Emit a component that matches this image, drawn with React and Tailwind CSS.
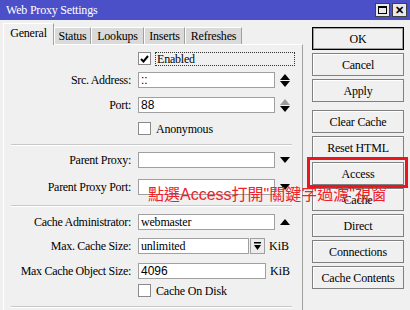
import React from "react";

const serif = { fontFamily: '"Liberation Serif", "Times New Roman", serif' };

const Tri = ({ up, gray }) => (
  <svg width="10" height="6" viewBox="0 0 10 6">
    {up ? (
      <path d="M5 0 L10 6 L0 6 Z" fill={gray ? "#9a9a9a" : "#000"} />
    ) : (
      <path d="M0 0 L10 0 L5 6 Z" fill={gray ? "#9a9a9a" : "#000"} />
    )}
  </svg>
);

const Field = ({ label, value, mt, sans, up, down, upGray }) => (
  <div className={`flex items-center h-[16px] ${mt}`}>
    <div className="w-[127px] text-right text-[12px] tracking-[-0.3px] leading-none text-black">{label}</div>
    <div className="w-[7px]" />
    <div
      className={`w-[137px] h-[16px] bg-white border border-[#a0a0a0] px-[2px] flex items-center leading-none ${
        sans ? "font-['Liberation_Sans'] text-[12px]" : "text-[12px] tracking-[-0.2px]"
      }`}
    >
      {value}
    </div>
    <div className="w-[15px] flex flex-col items-end justify-center gap-[1px]">
      {up && <Tri up gray={upGray} />}
      {down && <Tri />}
    </div>
  </div>
);

const Check = ({ label, checked, mt, focus }) => (
  <div className={`flex items-center h-[13px] ${mt}`}>
    <div className="w-[134px]" />
    <div className="w-[13px] h-[13px] bg-white border border-[#8a8a8a] flex items-center justify-center">
      {checked && (
        <svg width="9" height="8" viewBox="0 0 9 8">
          <path d="M1 4 L3.5 6.5 L8 1" stroke="#000" strokeWidth="2" fill="none" />
        </svg>
      )}
    </div>
    <div
      className={`ml-[4px] h-[14px] flex items-center text-[12px] tracking-[-0.2px] leading-none px-[1px] ${
        focus ? "w-[140px] border border-dotted border-[#333]" : ""
      }`}
    >
      {label}
    </div>
  </div>
);

const Sep = ({ mt }) => <div className={`${mt} mx-[7px] w-[281px] h-[2px] border-t border-[#c8c8c8] border-b border-b-white`} />;

const Btn = ({ children, def, mt }) => (
  <div
    className={`w-[92px] h-[23px] flex items-center justify-center text-[12px] tracking-[-0.2px] leading-none bg-[#f0f0f0] ${mt || ""} ${
      def ? "border border-black shadow-[inset_0_0_0_1px_#a0a0a0]" : "border border-[#808080] shadow-[inset_1px_1px_0_#fff]"
    }`}
  >
    {children}
  </div>
);

export default function App() {
  const tabs = [
    { n: "Status", w: "w-[37px]" },
    { n: "Lookups", w: "w-[53px]" },
    { n: "Inserts", w: "w-[41px]" },
    { n: "Refreshes", w: "w-[57px]" },
  ];
  return (
    <div className="w-[410px] h-[310px] bg-[#f0f0f0] overflow-hidden relative text-black" style={serif}>
      <div className="h-[20px] bg-[#4c50c8] flex items-center justify-between pl-[6px] pr-[3px]">
        <span className="text-white text-[12px] tracking-[-0.2px] leading-none">Web Proxy Settings</span>
        <div className="flex gap-[2px]">
          <div className="w-[15px] h-[14px] bg-[#e8e8e8] border border-[#404040] flex items-center justify-center">
            <div className="w-[9px] h-[8px] border border-black border-t-2" />
          </div>
          <div className="w-[15px] h-[14px] bg-[#e8e8e8] border border-[#404040] flex items-center justify-center text-[11px] font-bold leading-none font-['Liberation_Sans']">
            ✕
          </div>
        </div>
      </div>

      <div className="flex">
        <div className="w-[303px] pl-[3px]">
          <div className="h-[24px] flex items-end pt-[2px]">
            <div className="w-[51px] h-[22px] bg-[#f0f0f0] border-l border-t border-white border-r border-r-[#a0a0a0] flex items-start justify-center pt-[3px] text-[12px] tracking-[-0.2px] leading-none -mb-[1px] relative z-10">
              General
            </div>
            {tabs.map((t) => (
              <div
                key={t.n}
                className={`${t.w} h-[17px] bg-[#dadada] border-l border-t border-white border-r border-r-[#a0a0a0] flex items-center justify-center text-[12px] tracking-[-0.2px] leading-none`}
              >
                {t.n}
              </div>
            ))}
          </div>
          <div className="h-[266px] border-l border-t border-white border-r border-r-[#a0a0a0] flex flex-col">
            <Check label="Enabled" checked focus mt="mt-[7px]" />
            <Field label="Src. Address:" value="::" mt="mt-[7px]" sans up down />
            <Field label="Port:" value="88" mt="mt-[9px]" sans up down upGray />
            <Check label="Anonymous" mt="mt-[9px]" />
            <Sep mt="mt-[9px]" />
            <Field label="Parent Proxy:" value="" mt="mt-[6px]" down />
            <Field label="Parent Proxy Port:" value="" mt="mt-[11px]" down />
            <Sep mt="mt-[10px]" />
            <Field label="Cache Administrator:" value="webmaster" mt="mt-[7px]" up />
            <div className="flex items-center h-[16px] mt-[8px]">
              <div className="w-[127px] text-right text-[12px] tracking-[-0.3px] leading-none">Max. Cache Size:</div>
              <div className="w-[7px]" />
              <div className="w-[111px] h-[16px] bg-white border border-[#a0a0a0] px-[2px] flex items-center text-[12px] tracking-[-0.2px] leading-none">
                unlimited
              </div>
              <div className="w-[15px] h-[16px] ml-[1px] bg-[#ececec] border border-[#a0a0a0] flex items-center justify-center">
                <svg width="9" height="9" viewBox="0 0 9 9">
                  <rect x="1" y="0" width="7" height="1.5" fill="#000" />
                  <path d="M1 3 L8 3 L4.5 8 Z" fill="#000" />
                </svg>
              </div>
              <span className="ml-[4px] text-[12px] leading-none">KiB</span>
            </div>
            <div className="flex items-center h-[16px] mt-[9px]">
              <div className="w-[127px] text-right text-[12px] tracking-[-0.3px] leading-none">Max Cache Object Size:</div>
              <div className="w-[7px]" />
              <div className="w-[128px] h-[16px] bg-white border border-[#a0a0a0] px-[2px] flex items-center text-[12px] leading-none font-['Liberation_Sans']">
                4096
              </div>
              <span className="ml-[4px] text-[12px] leading-none">KiB</span>
            </div>
            <Check label="Cache On Disk" mt="mt-[5px]" />
            <Sep mt="mt-[9px]" />
          </div>
        </div>

        <div className="flex flex-col pl-[9px] pt-[7px] gap-[3px]">
          <Btn def>OK</Btn>
          <Btn>Cancel</Btn>
          <Btn>Apply</Btn>
          <Btn mt="mt-[5px]">Clear Cache</Btn>
          <Btn>Reset HTML</Btn>
          <Btn>Access</Btn>
          <Btn>Cache</Btn>
          <Btn>Direct</Btn>
          <Btn>Connections</Btn>
          <Btn>Cache Contents</Btn>
        </div>
      </div>

      <div className="absolute left-[307px] top-[157px] w-[101px] h-[31px] border-[3px] border-[#e8161e]" />
      <div
        className="absolute left-[148px] top-[185px] text-[16px] leading-[20px] text-[#f0202a] whitespace-nowrap"
        style={{ fontFamily: '"Liberation Sans", "Noto Sans CJK TC", sans-serif' }}
      >
        點選Access打開"關鍵字過濾"視窗
      </div>
    </div>
  );
}
